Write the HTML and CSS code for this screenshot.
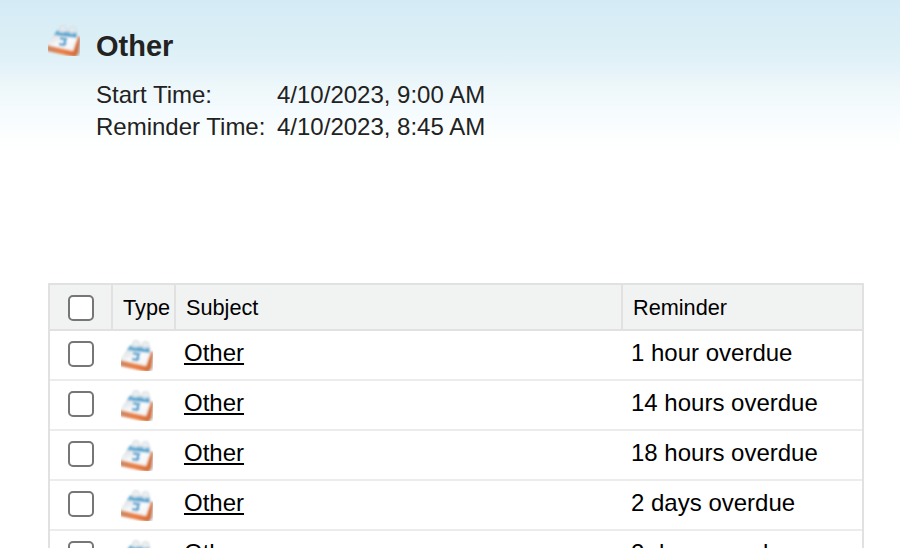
FILE: index.html
```html
<!DOCTYPE html>
<html lang="en">
<head>
<meta charset="utf-8">
<title>Reminders</title>
<link rel="stylesheet" href="styles.css">
</head>
<body>
<svg class="defs" aria-hidden="true">
  <defs>
    <linearGradient id="paper" x1="0" y1="0" x2="1" y2="1">
      <stop offset="0" stop-color="#ccd3d9"/><stop offset=".5" stop-color="#fafcfd"/><stop offset="1" stop-color="#f0f1f2"/>
    </linearGradient>
    <linearGradient id="base" x1="0" y1="0" x2="1" y2="0">
      <stop offset="0" stop-color="#c98867"/><stop offset=".45" stop-color="#ec8045"/><stop offset="1" stop-color="#cf6a35"/>
    </linearGradient>
    <filter id="soft" x="-10%" y="-10%" width="120%" height="120%"><feGaussianBlur stdDeviation=".95"/></filter>
    <symbol id="calendar" viewBox="0 0 32 32">
      <g filter="url(#soft)">
        <path d="M25 33 31 18 33 13v15l-3 5z" fill="#777" opacity=".35"/>
        <path d="M-1 21v6l28 6 3-4 2-16-3-1-4 12z" fill="url(#base)"/>
        <path d="M7 9 30 12 25 27 -1 21z" fill="url(#paper)"/>
        <path d="M-1 21 25 27 30 13" fill="none" stroke="#f3c6a6" stroke-width="1"/>
        <path d="M9 6.500 29 8 28.500 14 6 11z" fill="#62acd3"/>
        <path d="M11.500 9V5q0-3.500 3.500-3.500t3.500 3.500v4M21 10V6q0-3.500 3.500-3.500t3.500 3.500v4" fill="#e5e9ec" fill-opacity=".75" stroke="#d5d9dc" stroke-width="1"/>
        <path d="M12 8.500 14 12M17 8l1 4M21 9l1 4M26 9l1 4" fill="none" stroke="#4c9fce" stroke-width="1.500"/>
        <path d="M12 14.500 18 15.200 16.500 18q2 1.500-.5 3l-5-1" fill="none" stroke="#4c9fce" stroke-width="2.300"/>
      </g>
    </symbol>
  </defs>
</svg>
<header class="summary">
  <svg class="icon"><use href="#calendar"/></svg>
  <div class="details">
    <h1>Other</h1>
    <dl>
      <dt>Start Time:</dt><dd>4/10/2023, 9:00 AM</dd>
      <dt>Reminder Time:</dt><dd>4/10/2023, 8:45 AM</dd>
    </dl>
  </div>
</header>
<main class="list">
  <div class="row head">
    <div class="cell"><span class="check"></span></div><div class="cell">Type</div><div class="cell">Subject</div><div class="cell">Reminder</div>
  </div>
  <div class="row"><div class="pick"><span class="check"></span></div><svg class="icon"><use href="#calendar"/></svg><a class="subject">Other</a><div class="due">1 hour overdue</div></div>
  <div class="row"><div class="pick"><span class="check"></span></div><svg class="icon"><use href="#calendar"/></svg><a class="subject">Other</a><div class="due">14 hours overdue</div></div>
  <div class="row"><div class="pick"><span class="check"></span></div><svg class="icon"><use href="#calendar"/></svg><a class="subject">Other</a><div class="due">18 hours overdue</div></div>
  <div class="row"><div class="pick"><span class="check"></span></div><svg class="icon"><use href="#calendar"/></svg><a class="subject">Other</a><div class="due">2 days overdue</div></div>
  <div class="row"><div class="pick"><span class="check"></span></div><svg class="icon"><use href="#calendar"/></svg><a class="subject">Other</a><div class="due">2 days overdue</div></div>
</main>
</body>
</html>
```
FILE: styles.css
```css
* { box-sizing: border-box; }
html { overflow: hidden; }
body {
  margin: 0;
  height: 548px;
  overflow: hidden;
  display: flex;
  flex-direction: column;
  background: #fff;
  font-family: "Liberation Sans", Arial, sans-serif;
  font-size: 24px;
  color: #000;
}
.defs { width: 0; height: 0; position: absolute; }
.icon { display: block; width: 32px; height: 32px; overflow: hidden; }
.summary {
  flex: none;
  height: 283px;
  padding: 24px 48px 0;
  display: flex;
  gap: 16px;
  color: #222;
  background: linear-gradient(#d4ebf6 0, #dceff6 42px, #e4f2f9 68px, #edf7fa 85px, #f5fbfe 112px, #fcfefe 135px, #fff 152px);
}
h1 { margin: 5px 0 16px; font-size: 29px; line-height: 34px; }
dl {
  margin: 0;
  display: grid;
  grid-template-columns: 181px auto;
  line-height: 32px;
}
dd { margin: 0; }
.list {
  flex: none;
  width: 816px;
  margin-left: 48px;
  border: 2px solid #e1e1e1;
}
.row {
  display: grid;
  grid-template-columns: 63px 63px 447px 1fr;
  height: 50px;
  border-bottom: 2px solid #ececec;
}
.head {
  height: 46px;
  border-color: #e1e1e1;
  background: #f1f3f2;
  font-size: 21.7px;
  line-height: 45px;
}
.head .cell { padding-left: 10px; border-right: 2px solid #e1e1e1; }
.head .cell:first-child { padding: 10px 0 0 18px; }
.head .cell:last-child { border-right: 0; }
.check {
  display: block;
  width: 26px;
  height: 26px;
  border: 2px solid #767676;
  border-radius: 5px;
  background: #fff;
}
.pick { padding: 10px 0 0 18px; }
.row > .icon { margin: 8px 0 0 8px; }
.subject { padding-left: 8px; line-height: 44px; text-decoration: underline; text-decoration-thickness: 2px; text-underline-offset: 2px; }
.due { padding-left: 8px; line-height: 44px; }
```
